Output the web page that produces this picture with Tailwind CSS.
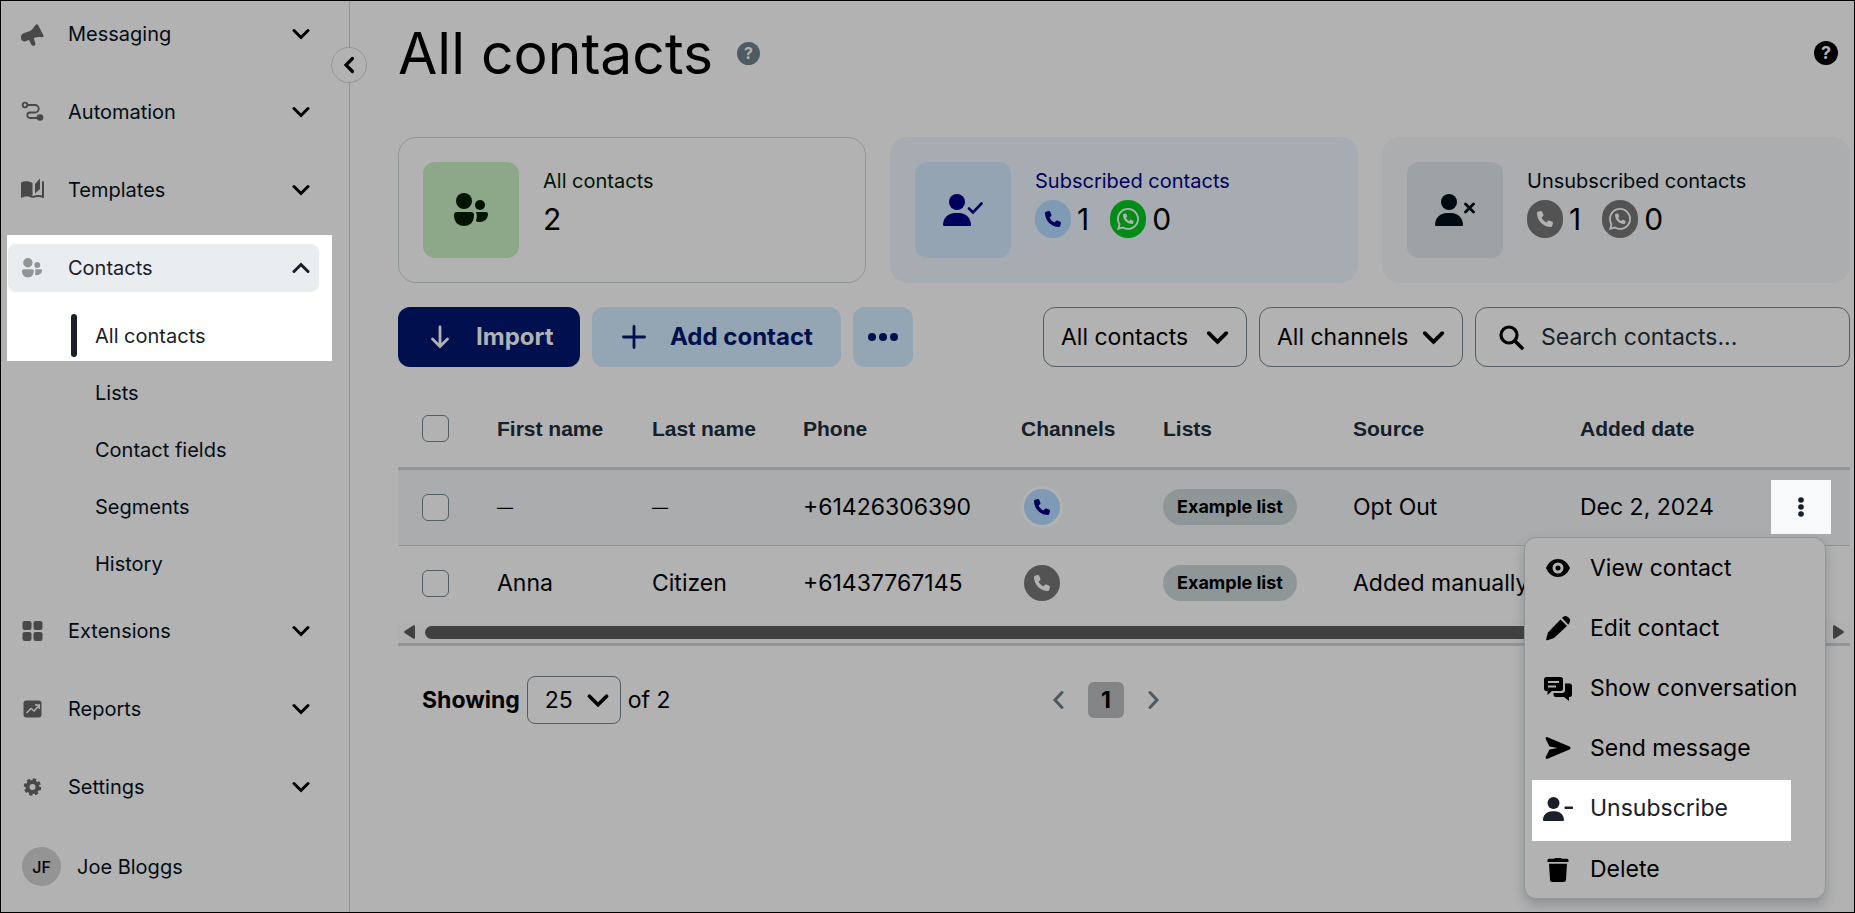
<!DOCTYPE html>
<html lang="en">
<head>
<meta charset="utf-8">
<meta name="viewport" content="width=device-width, initial-scale=1">
<title>All contacts</title>
<script src="https://cdn.jsdelivr.net/npm/@tailwindcss/browser@4"></script>
</head>
<body class="flex min-h-screen border border-black bg-[#b2b2b2] font-['Inter','Liberation_Sans',sans-serif] text-black">

<!-- Shared icon shapes -->
<svg class="hidden" aria-hidden="true">
  <symbol id="down" viewBox="0 0 18 12"><path d="M2 2.5l7 7 7-7" fill="none" stroke="currentColor" stroke-width="3" stroke-linecap="round" stroke-linejoin="miter"/></symbol>
  <symbol id="phone" viewBox="0 0 512 512"><path fill="currentColor" d="M164.9 24.6c-7.700-18.600-28-28.500-47.400-23.200l-88 24C12.100 30.200 0 46 0 64C0 311.400 200.600 512 448 512c18 0 33.800-12.100 38.600-29.500l24-88c5.300-19.400-4.600-39.700-23.200-47.400l-96-40c-16.300-6.800-35.200-2.100-46.300 11.600L304.700 368C234.300 334.700 177.300 277.700 144 207.300L193.300 167c13.700-11.200 18.400-30 11.600-46.300l-40-96z"/></symbol>
  <symbol id="whatsapp" viewBox="0 0 448 448">
    <path fill="currentColor" transform="translate(0 -32)" d="M380.9 97.1C339 55.1 283.2 32 223.9 32c-122.400 0-222 99.600-222 222 0 39.100 10.200 77.300 29.600 111L0 480l117.700-30.900c32.400 17.700 68.900 27 106.100 27h.1c122.300 0 224.100-99.600 224.100-222 0-59.300-25.200-115-67.100-157zm-157 341.600c-33.200 0-65.700-8.900-94-25.700l-6.700-4-69.800 18.300L72 359.200l-4.400-7c-18.500-29.400-28.200-63.300-28.200-98.200 0-101.700 82.800-184.500 184.600-184.500 49.300 0 95.600 19.200 130.400 54.100 34.800 34.900 56.200 81.200 56.100 130.500 0 101.800-84.900 184.600-186.600 184.600z"/>
    <path fill="currentColor" transform="translate(122 112) scale(.42)" d="M164.900 24.600c-7.700-18.600-28-28.500-47.400-23.200l-88 24C12.100 30.200 0 46 0 64C0 311.400 200.600 512 448 512c18 0 33.800-12.100 38.600-29.500l24-88c5.300-19.400-4.600-39.700-23.200-47.400l-96-40c-16.300-6.800-35.200-2.100-46.300 11.600L304.700 368C234.300 334.700 177.300 277.700 144 207.300L193.300 167c13.700-11.200 18.400-30 11.600-46.300l-40-96z"/>
  </symbol>
  <symbol id="people" viewBox="0 0 34 34"><g fill="currentColor"><circle cx="10" cy="8" r="8"/><path d="M3 19h14a3 3 0 0 1 3 3c0 7-4 11-10 11S0 29 0 22a3 3 0 0 1 3-3z"/><circle cx="26" cy="12" r="5"/><path d="M22 19h10a2 2 0 0 1 2 2c0 5-4 8-8 8-2 0-3 0-4-1 1-3 1-7 0-9z"/></g></symbol>
  <symbol id="person" viewBox="0 0 40 32"><g fill="currentColor"><circle cx="14" cy="8" r="8"/><path d="M0 31C0 24 5 19 12 19h4c7 0 12 5 12 12a1 1 0 0 1-1 1H1a1 1 0 0 1-1-1z"/></g></symbol>
</svg>

<aside class="relative w-[349px] shrink-0 border-r border-[#8f9394] text-xl text-[#040c14]">
  <button type="button" aria-label="Collapse menu" class="absolute top-[46px] -right-[18px] flex size-9 items-center justify-center rounded-full border border-[#8f9797] bg-[#b2b2b2] text-black">
    <svg class="h-[18px] w-3" viewBox="0 0 12 18"><path d="M9.500 2.500L3 9l6.500 6.500" fill="none" stroke="currentColor" stroke-width="3.200" stroke-linecap="round"/></svg>
  </button>

  <nav aria-label="Main" class="flex flex-col pt-[9px]">
    <div class="flex flex-col gap-[30px] pr-[31px] pl-[7px]">
      <button type="button" class="flex h-12 items-center pr-2 pl-3 text-left">
        <svg class="size-6 text-[#484848]" viewBox="0 0 24 24"><g fill="currentColor"><path d="M3.200 11.500C6.500 10 9.500 9.800 12 7.500L15.500 3c.8-1 2.200-.9 2.700.3l5.200 9.900c.5 1.200-.3 2.200-1.600 2-2-.4-4-.5-6.300.3L5.500 19.200c-1.700.6-3.500-.2-4.200-2-.9-2.200-.1-4.800 1.900-5.700z"/><path d="M8.500 17l5-1.800 1.800 6c.3 1.200-.2 2.200-1.200 2.600-1.200.4-2.300 0-2.800-1.200z"/></g></svg>
        <span class="flex-1 pl-6">Messaging</span><svg class="h-3 w-[18px] text-black"><use href="#down"/></svg>
      </button>
      <button type="button" class="flex h-12 items-center pr-2 pl-3 text-left">
        <svg class="size-6 text-[#484848]" viewBox="0 0 24 24"><g fill="none" stroke="currentColor" stroke-width="1.800"><circle cx="5" cy="5" r="2.300"/><path d="M7.500 5H15a3.300 3.300 0 0 1 0 7.500h-5a2.500 2.500 0 0 0 0 5.500h8"/></g><circle cx="20" cy="17.500" r="3.300" fill="currentColor"/></svg>
        <span class="flex-1 pl-6">Automation</span><svg class="h-3 w-[18px] text-black"><use href="#down"/></svg>
      </button>
      <button type="button" class="flex h-12 items-center pr-2 pl-3 text-left">
        <svg class="size-6 text-[#484848]" viewBox="0 0 24 24"><path fill="currentColor" d="M1 4.500C4.500 2.500 9 3 12.500 5v15C9 18 4.500 17.800 1 20z"/><path fill="currentColor" d="M15 6l5-5.500v10.500l-5 4.500z"/><path fill="none" stroke="currentColor" stroke-width="2" d="M12.500 19.200c3.500-1.500 7-1.700 10.500-.4V4.300l-1-.3"/></svg>
        <span class="flex-1 pl-6">Templates</span><svg class="h-3 w-[18px] text-black"><use href="#down"/></svg>
      </button>
    </div>

    <div class="mt-[21px] mr-[17px] ml-[6px] bg-white pt-[9px] pb-1 text-[#1a2029]">
      <button type="button" aria-expanded="true" class="mr-3 ml-px flex h-12 w-[311px] items-center rounded-lg bg-[#e9edf0] pr-[9px] pl-3 text-left">
        <span class="flex w-6 justify-center"><svg class="size-5 text-[#949494]"><use href="#people"/></svg></span>
        <span class="flex-1 pl-6">Contacts</span><svg class="h-3 w-[18px] rotate-180"><use href="#down"/></svg>
      </button>
      <a href="#" aria-current="page" class="mt-[22px] ml-16 flex h-[43px] items-center">
        <span class="h-full w-[6px] rounded-sm bg-[#1a2029]"></span><span class="pl-[18px]">All contacts</span>
      </a>
    </div>
    <div class="flex flex-col pt-[3px] pl-[94px]">
      <a href="#" class="flex h-[57px] items-center">Lists</a>
      <a href="#" class="flex h-[57px] items-center">Contact fields</a>
      <a href="#" class="flex h-[57px] items-center">Segments</a>
      <a href="#" class="flex h-[57px] items-center">History</a>
    </div>

    <div class="mt-[15px] flex flex-col gap-[30px] pr-[31px] pl-[7px]">
      <button type="button" class="flex h-12 items-center pr-2 pl-3 text-left">
        <svg class="size-6 text-[#484848]" viewBox="0 0 24 24"><g fill="currentColor"><rect x="2.500" y="2" width="9" height="9" rx="2.200"/><rect x="13.500" y="2" width="9" height="9" rx="2.200"/><rect x="2.500" y="13" width="9" height="9" rx="2.200"/><rect x="13.500" y="13" width="9" height="9" rx="2.200"/></g></svg>
        <span class="flex-1 pl-6">Extensions</span><svg class="h-3 w-[18px] text-black"><use href="#down"/></svg>
      </button>
      <button type="button" class="flex h-12 items-center pr-2 pl-3 text-left">
        <svg class="size-6 text-[#484848]" viewBox="0 0 24 24"><rect x="3.500" y="3.500" width="18" height="17" rx="3" fill="currentColor"/><path d="M6.500 16l4.500-4.500 3 2.500 5-5.500M15 8h4.300v4" fill="none" stroke="#b2b2b2" stroke-width="1.500"/></svg>
        <span class="flex-1 pl-6">Reports</span><svg class="h-3 w-[18px] text-black"><use href="#down"/></svg>
      </button>
      <button type="button" class="flex h-12 items-center pr-2 pl-3 text-left">
        <svg class="size-6 text-[#484848]" viewBox="0 0 24 24"><g fill="none" stroke="currentColor"><circle cx="12.500" cy="12" r="5" stroke-width="4"/><circle cx="12.500" cy="12" r="7.200" stroke-width="3" stroke-dasharray="3.250 2.400"/></g></svg>
        <span class="flex-1 pl-6">Settings</span><svg class="h-3 w-[18px] text-black"><use href="#down"/></svg>
      </button>
    </div>

    <a href="#" class="mt-9 flex items-center gap-4 pl-[21px]">
      <span class="flex size-[39px] items-center justify-center rounded-full bg-[#949494] text-base font-medium text-black">JF</span>
      Joe Bloggs
    </a>
  </nav>
</aside>

<main class="min-w-0 flex-1 pr-1 pl-12">
  <header class="flex h-[104px] items-center pr-3">
    <h1 class="text-[57px] leading-none">All contacts</h1>
    <button type="button" aria-label="About this page" class="ml-6 flex size-[23px] items-center justify-center rounded-full bg-[#4f5b62] text-base font-bold text-[#b2b2b2]">?</button>
    <button type="button" aria-label="Help" class="ml-auto flex size-6 items-center justify-center rounded-full bg-black text-lg font-bold text-[#b2b2b2]">?</button>
  </header>

  <section aria-label="Summary" class="mt-8 grid grid-cols-3 gap-6">
    <article class="flex h-[146px] gap-6 rounded-[18px] border border-[#8f9797] p-6">
      <div class="flex size-24 items-center justify-center rounded-xl bg-[#8ca888] text-[#001400]"><svg class="size-[34px]"><use href="#people"/></svg></div>
      <div>
        <h2 class="mt-1 text-xl leading-[30px] text-[#001400]">All contacts</h2>
        <p class="mt-1 text-3xl leading-[38px]">2</p>
      </div>
    </article>
    <article class="flex h-[146px] gap-6 rounded-[18px] bg-[#a7acb3] p-[25px]">
      <div class="flex size-24 items-center justify-center rounded-xl bg-[#94a4b2] text-[#00005c]"><svg class="h-8 w-10" viewBox="0 0 40 32"><use href="#person"/><path d="M26 14.500l4 4 8.500-9" fill="none" stroke="currentColor" stroke-width="2.600" stroke-linecap="round"/></svg></div>
      <div>
        <h2 class="mt-1 text-xl leading-[30px] text-[#00005c]">Subscribed contacts</h2>
        <div class="mt-1 flex items-center gap-[21px] text-3xl leading-[38px]">
          <span class="flex items-center gap-[6px]"><span class="flex h-[38px] w-9 items-center justify-center rounded-full bg-[#7f9ab4] text-[#00005c]"><svg class="size-4"><use href="#phone"/></svg></span>1</span>
          <span class="flex items-center gap-[6px]"><span class="flex h-[38px] w-9 items-center justify-center rounded-full bg-[#008c17] text-[#b2b2b2]"><svg class="size-[22px]"><use href="#whatsapp"/></svg></span>0</span>
        </div>
      </div>
    </article>
    <article class="flex h-[146px] gap-6 rounded-[18px] bg-[#abadae] p-[25px]">
      <div class="flex size-24 items-center justify-center rounded-xl bg-[#9da2a4] text-[#000a10]"><svg class="h-8 w-10" viewBox="0 0 40 32"><use href="#person"/><path d="M30.500 10l8 8M38.500 10l-8 8" fill="none" stroke="currentColor" stroke-width="2.800" stroke-linecap="round"/></svg></div>
      <div>
        <h2 class="mt-1 text-xl leading-[30px] text-[#000a10]">Unsubscribed contacts</h2>
        <div class="mt-1 flex items-center gap-[21px] text-3xl leading-[38px]">
          <span class="flex items-center gap-[6px]"><span class="flex h-[38px] w-9 items-center justify-center rounded-full bg-[#535353] text-[#b2b2b2]"><svg class="size-4"><use href="#phone"/></svg></span>1</span>
          <span class="flex items-center gap-[6px]"><span class="flex h-[38px] w-9 items-center justify-center rounded-full bg-[#535353] text-[#b2b2b2]"><svg class="size-[22px]"><use href="#whatsapp"/></svg></span>0</span>
        </div>
      </div>
    </article>
  </section>

  <section aria-label="Actions" class="mt-6 flex h-[60px] gap-3 text-[23px]">
    <button type="button" class="flex w-[182px] items-center rounded-xl bg-[#00104e] pl-8 text-2xl font-bold text-[#b2b2b2]">
      <svg class="h-6 w-5" viewBox="0 0 20 24"><path d="M10 2v19M2.500 14l7.500 7.500 7.500-7.500" fill="none" stroke="currentColor" stroke-width="2.800" stroke-linecap="round"/></svg><span class="pl-[26px]">Import</span>
    </button>
    <button type="button" class="flex w-[249px] items-center rounded-xl bg-[#94a5b3] pl-[30px] text-2xl font-bold text-[#00104e]">
      <svg class="size-6" viewBox="0 0 24 24"><path d="M12 1.500v21M1.500 12h21" fill="none" stroke="currentColor" stroke-width="2.800" stroke-linecap="round"/></svg><span class="pl-6">Add contact</span>
    </button>
    <button type="button" aria-label="More actions" class="flex w-[60px] items-center justify-center rounded-xl bg-[#94a5b3] text-[#00104e]">
      <svg class="h-2 w-[30px]" viewBox="0 0 30 8"><g fill="currentColor"><circle cx="4" cy="4" r="4"/><circle cx="15" cy="4" r="4"/><circle cx="26" cy="4" r="4"/></g></svg>
    </button>
    <div class="relative ml-auto w-[204px]">
      <select aria-label="Contact filter" class="size-full appearance-none rounded-xl border border-[#515e63] pl-[17px]"><option>All contacts</option></select>
      <svg class="pointer-events-none absolute top-[23px] right-[18px] h-[15px] w-[23px]"><use href="#down"/></svg>
    </div>
    <div class="relative w-[204px]">
      <select aria-label="Channel filter" class="size-full appearance-none rounded-xl border border-[#515e63] pl-[17px]"><option>All channels</option></select>
      <svg class="pointer-events-none absolute top-[23px] right-[18px] h-[15px] w-[23px]"><use href="#down"/></svg>
    </div>
    <label class="flex w-[375px] items-center rounded-xl border border-[#515e63] pl-[23px]">
      <svg class="size-[25px]" viewBox="0 0 25 25"><circle cx="10" cy="10" r="8" fill="none" stroke="currentColor" stroke-width="3.200"/><path d="M16 16l7 7" fill="none" stroke="currentColor" stroke-width="3.600" stroke-linecap="round"/></svg>
      <input type="search" aria-label="Search contacts" placeholder="Search contacts..." class="min-w-0 flex-1 pl-[17px] outline-none placeholder:text-[#16222a]">
    </label>
  </section>

  <section aria-label="Contacts" class="relative mt-6">
    <table class="w-full table-fixed border-collapse text-left text-[23px] whitespace-nowrap">
      <colgroup><col class="w-[81px]"><col class="w-[155px]"><col class="w-[151px]"><col class="w-[218px]"><col class="w-[142px]"><col class="w-[190px]"><col class="w-[227px]"><col></colgroup>
      <thead>
        <tr class="h-[77px] border-b-3 border-[#8f9796] font-['Liberation_Sans',Arial,sans-serif] text-[21px] text-[#14202a]">
          <th class="pl-6"><input type="checkbox" aria-label="Select all contacts" class="block size-[27px] appearance-none rounded-md border border-[#515e63]"></th>
          <th class="pl-[18px]">First name</th><th class="pl-[18px]">Last name</th><th class="pl-[18px]">Phone</th><th class="pl-[18px]">Channels</th><th class="pl-[18px]">Lists</th><th class="pl-[18px]">Source</th><th class="pl-[18px]">Added date</th>
          <th aria-label="Actions"></th>
        </tr>
      </thead>
      <tbody>
        <tr class="h-[77px] border-b border-[#8f9498] bg-[#abacae]">
          <td class="pl-6"><input type="checkbox" aria-label="Select +61426306390" class="block size-[27px] appearance-none rounded-md border border-[#515e63] bg-[#b2b2b2]"></td>
          <td class="pl-[18px] text-base">—</td><td class="pl-[18px] text-base">—</td><td class="pl-[18px]">+61426306390</td>
          <td class="pl-[21px]"><span class="flex size-9 items-center justify-center rounded-full bg-[#7f9ab4] text-[#00005c] ring-3 ring-[#b2b2b2]"><svg class="size-4"><use href="#phone"/></svg></span></td>
          <td class="pl-[18px]"><span class="flex h-9 w-[134px] items-center justify-center rounded-full bg-[#8f9697] text-lg font-bold">Example list</span></td>
          <td class="pl-[18px]">Opt Out</td><td class="pl-[18px]">Dec 2, 2024</td>
          <td class="pr-[19px]"><button type="button" aria-label="Contact actions" aria-expanded="true" class="ml-auto flex h-[54px] w-[60px] items-center justify-center bg-[#f7f9fb] text-[#16202a]"><svg class="h-5 w-[6px]" viewBox="0 0 6 20"><g fill="currentColor"><circle cx="3" cy="3" r="2.800"/><circle cx="3" cy="10" r="2.800"/><circle cx="3" cy="17" r="2.800"/></g></svg></button></td>
        </tr>
        <tr class="h-[76px]">
          <td class="pl-6"><input type="checkbox" aria-label="Select Anna Citizen" class="block size-[27px] appearance-none rounded-md border border-[#515e63]"></td>
          <td class="pl-[18px]">Anna</td><td class="pl-[18px]">Citizen</td><td class="pl-[18px]">+61437767145</td>
          <td class="pl-[21px]"><span class="flex size-9 items-center justify-center rounded-full bg-[#535353] text-[#b2b2b2]"><svg class="size-4"><use href="#phone"/></svg></span></td>
          <td class="pl-[18px]"><span class="flex h-9 w-[134px] items-center justify-center rounded-full bg-[#8f9697] text-lg font-bold">Example list</span></td>
          <td class="pl-[18px]">Added manually</td><td></td><td></td>
        </tr>
      </tbody>
    </table>
    <!-- Horizontal scroll track -->
    <div class="flex h-[25px] items-center gap-[10px] border-b-3 border-[#8f9599] bg-[#b0b0b0] px-[6px] text-[#404040]">
      <svg class="h-[14px] w-[11px]" viewBox="0 0 11 14"><path fill="currentColor" d="M9.500.2Q11 0 11 1.500v11Q11 14 9.500 13.800L.6 8Q-.2 7 .6 6z"/></svg>
      <div class="h-[13px] flex-1 rounded-full bg-[#404040]"></div>
      <svg class="h-[14px] w-[11px] rotate-180" viewBox="0 0 11 14"><path fill="currentColor" d="M9.500.2Q11 0 11 1.500v11Q11 14 9.500 13.800L.6 8Q-.2 7 .6 6z"/></svg>
    </div>

    <!-- Row actions menu -->
    <div role="menu" class="absolute top-[146px] right-6 z-10 flex w-[302px] flex-col rounded-xl border border-[#8f9797] bg-[#b2b2b2] text-[23px] shadow-[0_6px_12px_rgba(60,70,75,0.3)]">
      <button type="button" role="menuitem" class="flex h-[60px] items-center gap-4 pl-[17px]">
        <svg class="size-8" viewBox="0 0 32 32"><path fill="currentColor" fill-rule="evenodd" d="M4 16C6.500 10 11 7 16 7s9.500 3 12 9c-2.500 6-7 9-12 9S6.500 22 4 16zm12-5.500a5.500 5.500 0 1 0 0 11 5.500 5.500 0 0 0 0-11z"/><circle cx="16" cy="16" r="2.500" fill="currentColor"/></svg>View contact
      </button>
      <button type="button" role="menuitem" class="flex h-[60px] items-center gap-4 pl-[17px]">
        <svg class="size-8" viewBox="0 0 32 32"><g fill="currentColor"><path d="M18.500 7.500l6.500 6.500L12 26l-6.500 2.200c-1 .3-1.500-.4-1.300-1.200L6 20.500z"/><path d="M20 6c2-2 3.500-2.300 5-1.500 1.500.8 2.500 1.800 3 3s0 2.500-1.700 5.200z"/></g></svg>Edit contact
      </button>
      <button type="button" role="menuitem" class="flex h-[60px] items-center gap-4 pl-[17px]">
        <svg class="size-8" viewBox="0 0 32 32"><path fill="currentColor" d="M4.500 5h14A2.500 2.500 0 0 1 21 7.500v9a2.500 2.500 0 0 1-2.500 2.500H10l-4.500 4v-4h-1A2.500 2.500 0 0 1 2 16.500v-9A2.500 2.500 0 0 1 4.500 5z"/><path d="M6 10h11M6 14.500h8" stroke="#b2b2b2" stroke-width="1.800"/><path fill="currentColor" d="M23 11.500h4.500A2.500 2.500 0 0 1 30 14v8.500a2.500 2.500 0 0 1-2.500 2.500H27v4l-5-4h-8a2.500 2.500 0 0 1-2.500-2.500V21H20a3 3 0 0 0 3-3z"/></svg>Show conversation
      </button>
      <button type="button" role="menuitem" class="flex h-[60px] items-center gap-4 pl-[17px]">
        <svg class="size-8" viewBox="0 0 32 32"><path fill="currentColor" d="M5.500 5.200l22 9.300c1.500.7 1.500 2.300 0 3l-22 9.300c-1.500.5-2.300-.8-1.700-2l3.700-7.300 8-1.500-8-1.500-3.700-7.300c-.6-1.200.2-2.500 1.700-2z"/></svg>Send message
      </button>
      <button type="button" role="menuitem" class="mt-[2px] ml-[7px] flex h-[61px] w-[259px] items-center gap-4 bg-white pb-1 pl-[10px] text-[#1a2029]">
        <svg class="h-6 w-8" viewBox="0 0 32 24"><g fill="currentColor"><circle cx="11.500" cy="6" r="6"/><path d="M1 23.200C1 18 5 14.300 10 14.300h3c5 0 9 3.700 9 8.900a.8.800 0 0 1-.8.800H1.800a.8.800 0 0 1-.8-.8z"/><rect x="22.500" y="9.500" width="8.500" height="2.400" rx=".6"/></g></svg>Unsubscribe
      </button>
      <button type="button" role="menuitem" class="flex h-[57px] items-center gap-4 pl-[17px]">
        <svg class="size-8" viewBox="0 0 32 32"><g fill="currentColor"><path d="M12 4.800L13 4h6l1 .8h5a1.500 1.500 0 0 1 1.500 1.500V8h-21V6.300A1.500 1.500 0 0 1 7 4.800z"/><path d="M7 9.800h18l-1 15.700a2.500 2.500 0 0 1-2.500 2.500h-11A2.500 2.500 0 0 1 8 25.500z"/></g></svg>Delete
      </button>
    </div>
  </section>

  <footer class="grid grid-cols-[1fr_auto_1fr] items-center pt-[30px] pr-[60px] pl-6 text-[23px]">
    <div class="flex items-center gap-[7px]">
      <strong class="font-bold">Showing</strong>
      <div class="relative h-12 w-[94px]">
        <select aria-label="Rows per page" class="size-full appearance-none rounded-lg border border-[#515e63] pl-[17px]"><option>25</option></select>
        <svg class="pointer-events-none absolute top-[17px] right-3 h-[15px] w-[22px]"><use href="#down"/></svg>
      </div>
      <span>of 2</span>
    </div>
    <nav aria-label="Pages" class="flex items-center gap-6">
      <button type="button" aria-label="Previous page" class="text-[#4d5960]"><svg class="h-5 w-3" viewBox="0 0 12 20"><path d="M10 2.500L3 10l7 7.500" fill="none" stroke="currentColor" stroke-width="3" stroke-linecap="round"/></svg></button>
      <button type="button" aria-current="page" class="size-9 rounded-md bg-[#838485] leading-9 font-bold">1</button>
      <button type="button" aria-label="Next page" class="text-[#4d5960]"><svg class="h-5 w-3" viewBox="0 0 12 20"><path d="M2 2.500L9 10l-7 7.500" fill="none" stroke="currentColor" stroke-width="3" stroke-linecap="round"/></svg></button>
    </nav>
  </footer>
</main>
</body>
</html>
